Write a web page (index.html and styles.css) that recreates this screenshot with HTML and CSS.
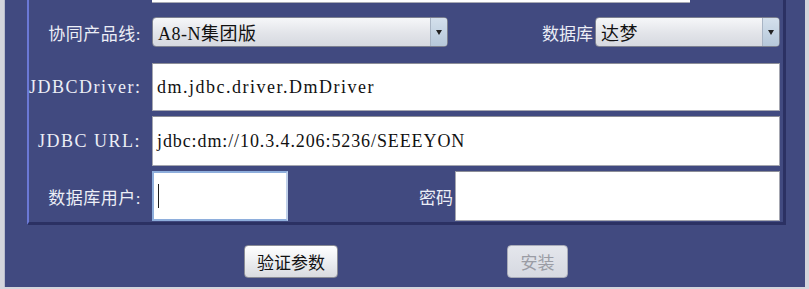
FILE: index.html
```html
<!doctype html>
<html>
  <head>
    <meta charset="utf-8" />
    <link rel="stylesheet" href="styles.css">
  </head>
  <body>
    <div class="frame">
      <div class="panel">
        <div class="stub"></div>

        <div class="row row-product">
          <div class="label label-cjk">协同产品线:</div>
          <div class="select select-product">
            <span class="select-text">A8-N集团版</span>
            <span class="select-arrow"></span>
          </div>
          <div class="label label-inline">数据库</div>
          <div class="select select-db">
            <span class="select-text">达梦</span>
            <span class="select-arrow"></span>
          </div>
        </div>

        <div class="row row-tall">
          <div class="label">JDBCDriver:</div>
          <div class="field field-wide">dm.jdbc.driver.DmDriver</div>
        </div>

        <div class="row row-tall">
          <div class="label">JDBC URL:</div>
          <div class="field field-wide field-url">jdbc:dm://10.3.4.206:5236/SEEEYON</div>
        </div>

        <div class="row row-tall">
          <div class="label label-cjk">数据库用户:</div>
          <div class="field field-user focused"><span class="caret"></span></div>
          <div class="label label-inline">密码</div>
          <div class="field field-pass"></div>
        </div>
      </div>

      <div class="actions">
        <button class="btn">验证参数</button>
        <button class="btn btn-install" disabled>安装</button>
      </div>
    </div>
  </body>
</html>
```

FILE: styles.css
```css
* {
  margin: 0;
  padding: 0;
  box-sizing: border-box;
}

body {
  width: 809px;
  height: 289px;
  background: #d4d5dc;
  font-family: 'Liberation Serif', 'Noto Sans CJK SC', serif;
  overflow: hidden;
}

.frame {
  margin: 0 4px 0 4px;
  height: 287px;
  background: #414a80;
  border-left: 1px solid #b8bccc;
  padding-left: 22px;
}

.panel {
  width: 759px;
  border-left: 2px solid #6b79d6;
  border-right: 3px solid #2b3163;
  border-bottom: 3px solid #2b3163;
  padding: 0 3px 1px 0;
}

.stub {
  margin-left: 123px;
  width: 538px;
  height: 3px;
  background: #fff;
  border-bottom: 1px solid #a8aab4;
}

.row {
  display: flex;
  align-items: center;
  margin-top: 5px;
}

.row-product {
  margin-top: 14px;
  height: 30px;
}

.row-tall {
  height: 50px;
}

.row-product + .row-tall {
  margin-top: 16px;
  height: 48px;
}

.label {
  width: 123px;
  flex: none;
  padding-right: 11px;
  text-align: right;
  font-size: 18px;
  letter-spacing: 1.5px;
  color: #eceef6;
  white-space: nowrap;
}

.label-cjk {
  font-size: 17px;
  letter-spacing: 0.5px;
}

.label-inline {
  flex: 1;
  width: auto;
  padding-right: 2px;
  letter-spacing: 0;
  font-size: 17px;
}

.select {
  height: 30px;
  display: flex;
  align-items: center;
  border: 1px solid #7c8090;
  border-radius: 4px;
  background: linear-gradient(#f6f7f9, #e2e4e9 55%, #d6d9e0);
  overflow: hidden;
}

.select-product {
  width: 296px;
}

.select-db {
  width: 185px;
}

.select-text {
  flex: 1;
  padding-left: 5px;
  font-size: 18px;
  letter-spacing: 0.5px;
  color: #111;
}

.select-arrow {
  width: 17px;
  height: 100%;
  border-left: 1px solid #a8b4c4;
  background: linear-gradient(#d4e0ec, #b6c8da);
  position: relative;
}

.select-arrow::after {
  content: '';
  position: absolute;
  left: 5px;
  top: 12px;
  border-left: 3px solid transparent;
  border-right: 3px solid transparent;
  border-top: 5px solid #222;
}

.field {
  height: 100%;
  background: #fff;
  border: 1px solid #a4a6b0;
  border-top-color: #8c8e98;
  display: flex;
  align-items: center;
  padding-left: 4px;
  font-size: 18px;
  letter-spacing: 1.5px;
  color: #111;
}

.field-wide {
  flex: 1;
}

.field-url {
  letter-spacing: 0.9px;
}

.field-user {
  width: 136px;
  flex: none;
}

.field-pass {
  width: 325px;
}

.focused {
  border: 2px solid #8eaedc;
  border-right-color: #c0d0ea;
}

.caret {
  width: 1px;
  height: 24px;
  background: #222;
}

.actions {
  display: flex;
  gap: 169px;
  padding: 20px 0 0 217px;
}

.btn {
  height: 33px;
  padding: 0 12px;
  border: 1px solid #8a8c96;
  border-radius: 4px;
  background: linear-gradient(#ffffff, #eceef1 50%, #d9dbe0);
  font-family: 'Noto Sans CJK SC', sans-serif;
  font-size: 17px;
  color: #111;
  width: 94px;
}

.btn-install {
  width: 61px;
  padding: 0;
  color: #9a9ca4;
  background: linear-gradient(#e4e6ec, #d6d9e1);
  border-color: #a8abb8;
}
```
